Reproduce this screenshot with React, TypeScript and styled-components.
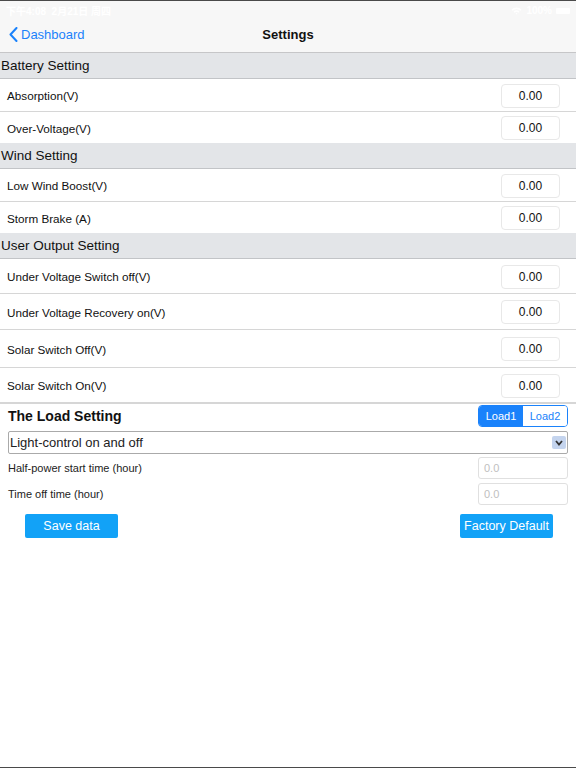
import React from "react";
import styled, { createGlobalStyle } from "styled-components";

const GlobalStyle = createGlobalStyle`
  html, body {
    margin: 0;
    padding: 0;
    background: #ffffff;
  }
  body {
    font-family: "Liberation Sans", Arial, sans-serif;
    color: #111;
  }
`;

interface FieldRow {
  label: string;
  height: number;
}

interface Section {
  title: string;
  rows: FieldRow[];
  closed?: boolean;
}

const sections: Section[] = [
  {
    title: "Battery Setting",
    rows: [
      { label: "Absorption(V)", height: 33 },
      { label: "Over-Voltage(V)", height: 31 },
    ],
  },
  {
    title: "Wind Setting",
    rows: [
      { label: "Low Wind Boost(V)", height: 33 },
      { label: "Storm Brake (A)", height: 31 },
    ],
  },
  {
    title: "User Output Setting",
    closed: true,
    rows: [
      { label: "Under Voltage Switch off(V)", height: 35 },
      { label: "Under Voltage Recovery on(V)", height: 36 },
      { label: "Solar Switch Off(V)", height: 38 },
      { label: "Solar Switch On(V)", height: 35 },
    ],
  },
];

// iPad frame
const Screen = styled.div`
  height: 768px;
  box-sizing: border-box;
  border-top: 1px solid #4a4a4a;
  border-bottom: 1px solid #4a4a4a;
  display: flex;
  flex-direction: column;
  background: #fff;
`;

const StatusBar = styled.div`
  height: 19px;
  background: #f7f7f7;
  display: flex;
  align-items: center;
  justify-content: space-between;
  padding: 0 6px;
  color: #fff;
  font-size: 10px;
  font-weight: bold;
  font-family: "Liberation Sans", "Noto Sans CJK SC", sans-serif;
`;

const StatusRight = styled.div`
  display: flex;
  align-items: center;
  gap: 4px;
`;

const Battery = styled.span`
  width: 14px;
  height: 6px;
  background: #fff;
  border-radius: 1px;
`;

const NavBar = styled.div`
  height: 33px;
  box-sizing: border-box;
  padding-bottom: 4px;
  background: #f7f7f7;
  border-bottom: 1px solid #c6c6c8;
  display: grid;
  grid-template-columns: 1fr auto 1fr;
  align-items: center;
`;

const BackLink = styled.div`
  display: flex;
  align-items: center;
  gap: 3px;
  padding-left: 9px;
  color: #1a82fb;
  font-size: 13px;
`;

const NavTitle = styled.div`
  font-size: 13px;
  font-weight: bold;
  color: #111;
`;

const SectionHeader = styled.div`
  height: 25px;
  background: #e3e5e8;
  border-bottom: 1px solid #c2c4c7;
  display: flex;
  align-items: center;
  padding-left: 1px;
  font-size: 13.5px;
  color: #111;
`;

const Row = styled.div<{ $h: number; $last?: boolean }>`
  height: ${(p) => p.$h}px;
  box-sizing: border-box;
  border-bottom: ${(p) => (p.$last ? "none" : "1px solid #d6d6d6")};
  display: flex;
  align-items: center;
  justify-content: space-between;
  padding: 1px 16px 0 7px;
  font-size: 11.7px;
`;

const ValueBox = styled.div`
  width: 59px;
  height: 24px;
  box-sizing: border-box;
  border: 1px solid #e8e8e8;
  border-radius: 4px;
  display: flex;
  align-items: center;
  justify-content: center;
  font-size: 12px;
`;

const LoadPanel = styled.div`
  border-top: 1px solid #d6d6d6;
  padding: 0 8px 0 8px;
  display: flex;
  flex-direction: column;
`;

const LoadHeader = styled.div`
  height: 24px;
  display: flex;
  align-items: center;
  justify-content: space-between;
`;

const LoadTitle = styled.div`
  font-size: 14px;
  font-weight: bold;
`;

const Segmented = styled.div`
  display: flex;
  border: 1px solid #1a82fb;
  border-radius: 4px;
  overflow: hidden;
  height: 22px;
  box-sizing: border-box;
`;

const Segment = styled.div<{ $active?: boolean }>`
  width: 44px;
  display: flex;
  align-items: center;
  justify-content: center;
  font-size: 11px;
  background: ${(p) => (p.$active ? "#1a82fb" : "#fff")};
  color: ${(p) => (p.$active ? "#fff" : "#1a82fb")};
`;

const Select = styled.div`
  margin-top: 3px;
  height: 23px;
  box-sizing: border-box;
  border: 1px solid #aaa;
  border-radius: 2px;
  display: flex;
  align-items: center;
  justify-content: space-between;
  padding: 0 1px 0 1px;
  font-size: 13px;
  color: #222;
`;

const SelectArrow = styled.div`
  width: 14px;
  height: 13px;
  background: #c4d4ee;
  border-radius: 2px;
  display: flex;
  align-items: center;
  justify-content: center;
`;

const TimeRow = styled.div<{ $first?: boolean }>`
  height: 26px;
  margin-top: ${(p) => (p.$first ? 1 : 0)}px;
  display: flex;
  align-items: center;
  justify-content: space-between;
  font-size: 11px;
  color: #222;
`;

const TimeInput = styled.div`
  width: 90px;
  height: 22px;
  box-sizing: border-box;
  border: 1px solid #e0e0e0;
  border-radius: 3px;
  display: flex;
  align-items: center;
  padding-left: 5px;
  font-size: 11px;
  color: #c0c0c0;
`;

const Actions = styled.div`
  display: flex;
  justify-content: space-between;
  padding: 7px 23px 0 25px;
`;

const ActionButton = styled.div`
  width: 93px;
  height: 24px;
  background: #12a2f7;
  border-radius: 2px;
  color: #fff;
  font-size: 12.5px;
  display: flex;
  align-items: center;
  justify-content: center;
`;

const Spacer = styled.div`
  flex: 1;
`;

export default function App() {
  return (
    <>
      <GlobalStyle />
      <Screen>
        <StatusBar>
          <span>下午4:08&nbsp;&nbsp;2月21日 周四</span>
          <StatusRight>
            <svg width="11" height="8" viewBox="0 0 11 8">
              <path d="M0.5 2.6 A7 7 0 0 1 10.5 2.6 L9.3 3.8 A5.3 5.3 0 0 0 1.7 3.8 Z M2.5 4.6 A4.2 4.2 0 0 1 8.5 4.6 L7.3 5.8 A2.5 2.5 0 0 0 3.7 5.8 Z M4.5 6.6 A1.4 1.4 0 0 1 6.5 6.6 L5.5 7.6 Z" fill="#fff" />
            </svg>
            <span>100%</span>
            <Battery />
          </StatusRight>
        </StatusBar>
        <NavBar>
          <BackLink>
            <svg width="9" height="15" viewBox="0 0 9 15">
              <path d="M7.5 1 L1.5 7.5 L7.5 14" stroke="#1a82fb" strokeWidth="2" fill="none" strokeLinecap="round" strokeLinejoin="round" />
            </svg>
            <span>Dashboard</span>
          </BackLink>
          <NavTitle>Settings</NavTitle>
          <div />
        </NavBar>
        {sections.map((section) => (
          <React.Fragment key={section.title}>
            <SectionHeader>{section.title}</SectionHeader>
            {section.rows.map((row, i) => (
              <Row key={row.label} $h={row.height} $last={i === section.rows.length - 1 && !section.closed}>
                <span>{row.label}</span>
                <ValueBox>0.00</ValueBox>
              </Row>
            ))}
          </React.Fragment>
        ))}
        <LoadPanel>
          <LoadHeader>
            <LoadTitle>The Load Setting</LoadTitle>
            <Segmented>
              <Segment $active>Load1</Segment>
              <Segment>Load2</Segment>
            </Segmented>
          </LoadHeader>
          <Select>
            <span>Light-control on and off</span>
            <SelectArrow>
              <svg width="8" height="6" viewBox="0 0 8 6">
                <path d="M1 1 L4 4.5 L7 1" stroke="#333" strokeWidth="1.8" fill="none" />
              </svg>
            </SelectArrow>
          </Select>
          <TimeRow $first>
            <span>Half-power start time (hour)</span>
            <TimeInput>0.0</TimeInput>
          </TimeRow>
          <TimeRow>
            <span>Time off time (hour)</span>
            <TimeInput>0.0</TimeInput>
          </TimeRow>
        </LoadPanel>
        <Actions>
          <ActionButton>Save data</ActionButton>
          <ActionButton>Factory Default</ActionButton>
        </Actions>
        <Spacer />
      </Screen>
    </>
  );
}
